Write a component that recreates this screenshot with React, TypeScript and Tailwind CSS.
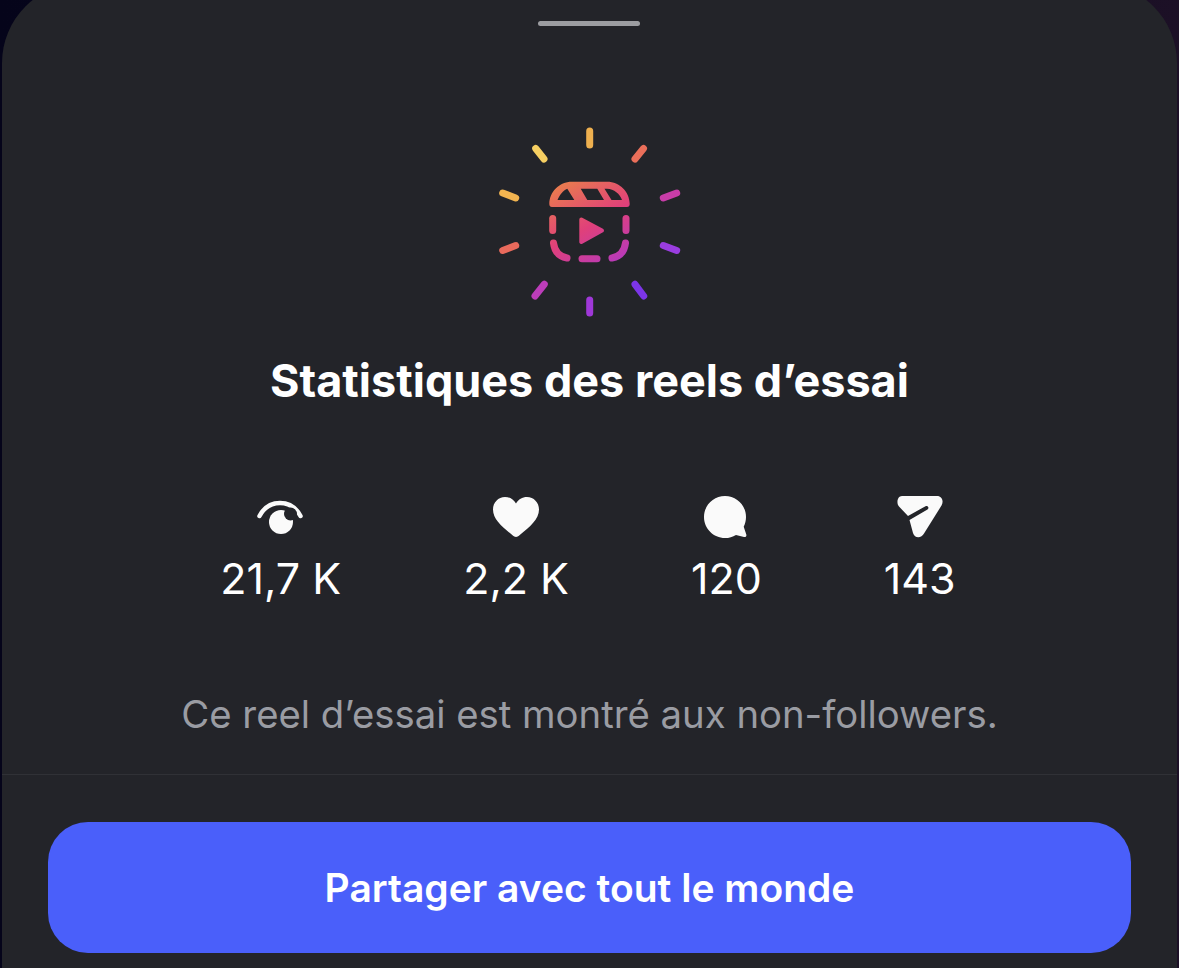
const rays: [number, number, number, number, string][] = [
  [109.7, 21, 109.7, 35, "#eeb04f"],
  [55.7, 38.5, 64, 49, "#f6cf62"],
  [163.5, 38.5, 155, 49, "#ea6f5a"],
  [22.7, 83, 35.7, 88, "#f2b450"],
  [196.7, 83, 183.3, 88, "#c83da8"],
  [22.7, 140.5, 35.7, 135.5, "#e96a5c"],
  [183.3, 135.5, 196.7, 140.5, "#9a3de0"],
  [55, 186, 64.3, 174.3, "#bc3dba"],
  [155, 174.3, 163.7, 186, "#7c35e8"],
  [109.7, 190, 109.7, 203, "#9f38d8"],
];

function ReelsBurst() {
  return (
    <svg width="220" height="220" viewBox="0 0 220 220" fill="none">
      <defs>
        <linearGradient id="g" gradientUnits="userSpaceOnUse" x1="85" y1="68" x2="135" y2="152">
          <stop offset="0" stopColor="#ea7f4c" />
          <stop offset="0.55" stopColor="#e0407a" />
          <stop offset="1" stopColor="#b93ab8" />
        </linearGradient>
      </defs>
      {rays.map(([a, b, c, d, col], i) => (
        <line key={i} x1={a} y1={b} x2={c} y2={d} stroke={col} strokeWidth="7" strokeLinecap="round" />
      ))}
      <path
        fillRule="evenodd"
        fill="url(#g)"
        d="M92 71.700H127C140 71.700 149.700 82 149.700 94C149.700 96 148.700 97 147 97H72C70.300 97 69.300 96 69.300 94C69.300 82 79 71.700 92 71.700ZM87.300 78.700C83 80.500 79.500 85 77.500 90H94.300L87.300 78.700ZM100.700 78.700L107.300 90H124L117.300 78.700H100.700ZM124.500 78.700L131.500 90H142C140 84 134 78.700 127 78.700H124.500Z"
      />
      <g stroke="url(#g)" strokeWidth="7" strokeLinecap="round" fill="none">
        <path d="M72.700 108.500V120.500" />
        <path d="M146 108.500V120.500" />
        <path d="M73.500 133C74.500 141 79 146.500 87 148" />
        <path d="M145.500 133C144.500 141 140 146.500 132 148" />
        <path d="M102 148.700H117" />
      </g>
      <path d="M101.300 109.500L122 120.500L101.300 132Z" fill="url(#g)" stroke="url(#g)" strokeWidth="4" strokeLinejoin="round" />
    </svg>
  );
}

function EyeIcon() {
  return (
    <svg width="48" height="40" viewBox="0 0 48 40" fill="none">
      <path d="M2.500 19C7 10.500 14.500 6 23 6C31.500 6 39 10.500 43.500 19" stroke="#fafafa" strokeWidth="4.500" strokeLinecap="round" />
      <circle cx="24" cy="25" r="12" fill="#fafafa" />
      <circle cx="33.500" cy="17" r="6.500" fill="#232429" />
    </svg>
  );
}

function HeartIcon() {
  return (
    <svg width="48" height="40" viewBox="0 0 48 40">
      <path
        fill="#fafafa"
        d="M24 40C22.800 40 21.800 39.400 20.500 38.300C10 29.500 1 22.500 1 12.500C1 5.500 6.300 0 13 0C17.800 0 21.500 2.300 24 6.500C26.500 2.300 30.200 0 35 0C41.700 0 47 5.500 47 12.500C47 22.500 38 29.500 27.500 38.300C26.200 39.400 25.200 40 24 40Z"
      />
    </svg>
  );
}

function CommentIcon() {
  return (
    <svg width="48" height="42" viewBox="0 0 48 42">
      <path
        fill="#fafafa"
        d="M23 0C34.600 0 44 9.400 44 21C44 24.500 43.200 27.800 41.700 30.700L44.300 38.500C44.800 40.200 43.700 41.500 42 41L34 38.900C30.800 40.900 27 42 23 42C11.400 42 2 32.600 2 21C2 9.400 11.400 0 23 0Z"
      />
    </svg>
  );
}

function SendIcon() {
  return (
    <svg width="46" height="42" viewBox="0 0 46 42">
      <path
        fill="#fafafa"
        d="M5 0H40C45 0 47 5 44.500 9.500L27 37.500C24.500 42.500 17.500 42.500 16 37L12.500 24L30.500 13.500C32.500 12 31 9 28.500 10.200L11 20L2 10.500C-1 7 0.500 0 5 0Z"
      />
    </svg>
  );
}

const stats = [
  { icon: <EyeIcon />, value: "21,7 K" },
  { icon: <HeartIcon />, value: "2,2 K" },
  { icon: <CommentIcon />, value: "120" },
  { icon: <SendIcon />, value: "143" },
];

export default function App() {
  return (
    <div
      className="h-[968px] w-[1179px] overflow-hidden bg-gradient-to-r from-[#05041a] to-[#1c1026] px-[2px]"
      style={{ fontFamily: "Inter, 'Liberation Sans', sans-serif" }}
    >
      <div className="mt-[-17px] flex h-[985px] flex-col items-center rounded-t-[80px] bg-[#232429]">
        <div className="mt-[38px] mr-[2px] h-[5px] w-[102px] rounded-full bg-[#9c9da1]" />
        <div className="mt-[84px]">
          <ReelsBurst />
        </div>
        <h1 className="mt-[22px] text-[45px] leading-[58px] font-bold text-white">Statistiques des reels d’essai</h1>
        <div className="mt-[82px] flex h-[118px] items-start justify-center gap-[122px] pr-[3px]">
          {stats.map((s) => (
            <div key={s.value} className="flex flex-col items-center">
              <div className="flex h-[50px] items-center">{s.icon}</div>
              <span className="mt-[8px] text-[43px] leading-[56px] font-normal text-white">{s.value}</span>
            </div>
          ))}
        </div>
        <p className="mt-[79px] text-[38.3px] leading-[50px] font-normal text-[#9a9ca3]">
          Ce reel d’essai est montré aux non-followers.
        </p>
        <div className="mt-[35px] h-px w-full bg-[#303136]" />
        <button className="mt-[47px] flex h-[131px] w-[1083px] shrink-0 items-center justify-center rounded-[40px] bg-[#4a5ffa] pt-[2px] text-[39px] font-semibold text-white">
          Partager avec tout le monde
        </button>
      </div>
    </div>
  );
}
